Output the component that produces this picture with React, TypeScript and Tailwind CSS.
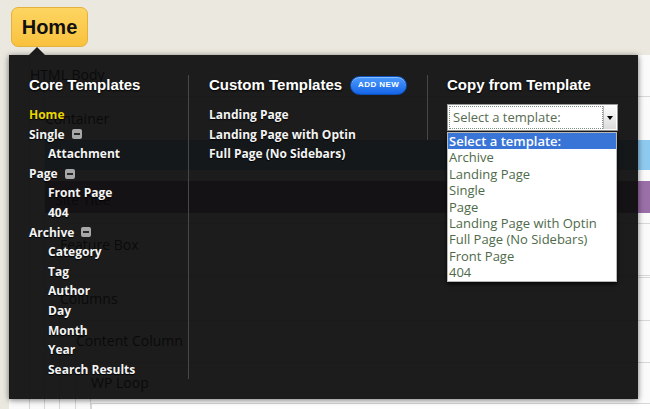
import React from "react";

const heading = "font-['Liberation_Sans',Arial,sans-serif] font-bold text-[15px] leading-[20px] text-white [text-shadow:0_1px_2px_#000]";
const item = "flex items-center h-[19.6px] font-['Open_Sans',sans-serif] font-bold text-[12px] leading-[19.6px] [text-shadow:0_1px_1px_#000] whitespace-nowrap";
const ghost = "font-['Open_Sans',sans-serif] text-[14px] leading-[18px] text-black whitespace-nowrap";

function Minus() {
  return (
    <span className="ml-[7px] flex h-[10px] w-[10px] items-center justify-center rounded-[2px] bg-[#a8a8a8]">
      <span className="h-[2px] w-[6px] bg-[#2a2a2a]" />
    </span>
  );
}

type Row = { label: string; level: 0 | 1; toggle?: boolean; active?: boolean };

const core: Row[] = [
  { label: "Home", level: 0, active: true },
  { label: "Single", level: 0, toggle: true },
  { label: "Attachment", level: 1 },
  { label: "Page", level: 0, toggle: true },
  { label: "Front Page", level: 1 },
  { label: "404", level: 1 },
  { label: "Archive", level: 0, toggle: true },
  { label: "Category", level: 1 },
  { label: "Tag", level: 1 },
  { label: "Author", level: 1 },
  { label: "Day", level: 1 },
  { label: "Month", level: 1 },
  { label: "Year", level: 1 },
  { label: "Search Results", level: 1 },
];

const custom = ["Landing Page", "Landing Page with Optin", "Full Page (No Sidebars)"];

const options = [
  "Archive",
  "Landing Page",
  "Single",
  "Page",
  "Landing Page with Optin",
  "Full Page (No Sidebars)",
  "Front Page",
  "404",
];

function Canvas() {
  // the page being edited, seen through the menu
  return (
    <div className="ml-[9px] mt-[8px] h-[360px] bg-[#fbfbfb] pl-[20px]">
      <div className="h-full border-l border-[#d8d8d8]">
        <div className={`${ghost} h-[41px] pt-[11px]`}>HTML Body</div>
        <div className="ml-[14px] border-l border-t border-[#d8d8d8]">
          <div className={`${ghost} h-[43px] pt-[13px]`}>Container</div>
          <div className="h-[30px] bg-[#8ecaf0]" />
          <div className="h-[11px]" />
          <div className={`${ghost} h-[32px] bg-[#9b6fa8] pl-[10px] pt-[10px] text-[#222]`}>Site Title</div>
          <div className="h-[10px]" />
          <div className="ml-[14px] border-l border-t border-[#d8d8d8]">
            <div className={`${ghost} h-[51px] pt-[12px]`}>Feature Box</div>
            <div className="border-t border-[#d8d8d8] pt-[1px]">
              <div className="border-t border-[#d8d8d8]">
                <div className={`${ghost} h-[42px] pt-[12px]`}>Columns</div>
                <div className="ml-[15px] border-l border-t border-[#d8d8d8]">
                  <div className={`${ghost} h-[41px] pt-[11px]`}>Content Column</div>
                  <div className="ml-[14px] border-l border-t border-[#d8d8d8]">
                    <div className={`${ghost} h-[40px] pt-[11px]`}>WP Loop</div>
                    <div className="h-[20px] border-l border-t border-[#d8d8d8] bg-white" />
                  </div>
                </div>
              </div>
            </div>
          </div>
        </div>
      </div>
    </div>
  );
}

function TemplateSelect() {
  return (
    <div className="relative mt-[9px] w-[171px]">
      <div className="flex h-[27px] items-stretch border border-[#9a9a9a] bg-white p-[1px]">
        <div className="flex flex-1 items-center border border-dotted border-[#7f957f] pl-[3px] font-['Open_Sans',sans-serif] text-[13px] text-[#566b52]">
          Select a template:
        </div>
        <div className="flex w-[13px] items-center justify-center border-l border-[#b5b5b5] bg-gradient-to-b from-[#fdfdfd] to-[#dcdcdc]">
          <span className="h-0 w-0 border-x-[3px] border-t-[4px] border-x-transparent border-t-black" />
        </div>
      </div>
      <div className="absolute left-0 top-[28px] w-[170px] border border-[#b8b8b8] bg-white shadow-[0_2px_4px_rgba(0,0,0,0.8)]">
        <div className="h-[16.4px] bg-[#3875d7] pl-[1px] font-['Open_Sans',sans-serif] text-[13px] font-semibold leading-[16.4px] text-white">
          Select a template:
        </div>
        {options.map((o) => (
          <div key={o} className="h-[16.4px] pl-[1px] font-['Open_Sans',sans-serif] text-[13px] leading-[16.4px] text-[#4e6a4a] whitespace-nowrap">
            {o}
          </div>
        ))}
      </div>
    </div>
  );
}

export default function App() {
  return (
    <div className="relative h-[409px] w-[650px] overflow-hidden bg-[#ebe8df]">
      <div className="ml-[11px] mt-[7px] flex h-[40px] w-[77px] items-center justify-center rounded-[7px] border border-[#e3b23c] bg-gradient-to-b from-[#fdd560] to-[#f9c23d] font-['Liberation_Sans',Arial,sans-serif] text-[20px] font-bold text-[#111]">
        Home
      </div>
      <Canvas />

      {/* template menu */}
      <div className="absolute left-[9px] top-[55px] flex w-[629px] items-start bg-[#0b0b0b]/[0.93] pb-[20px] pl-[20px] pt-[20px] shadow-[0_1px_6px_rgba(0,0,0,0.55)]">
        <span className="absolute -top-[8px] left-[20px] h-0 w-0 border-x-[8px] border-b-[8px] border-x-transparent border-b-[#1a1a1a]" />

        <div className="w-[160px] border-r border-[#474747]">
          <div className={heading}>Core Templates</div>
          <ul className="mt-[10px]">
            {core.map((r) => (
              <li
                key={r.label}
                className={`${item} ${r.level === 1 ? "pl-[19px]" : ""} ${r.active ? "text-[#ead600]" : "text-[#f4f4f4]"}`}
              >
                {r.label}
                {r.toggle && <Minus />}
              </li>
            ))}
          </ul>
        </div>

        <div className="w-[238px] pl-[20px]">
          <div className="flex items-center gap-[8px]">
            <span className={heading}>Custom Templates</span>
            <button className="flex h-[19px] w-[57px] items-center justify-center rounded-full border border-[#0d4fb8] bg-gradient-to-b from-[#4c9bff] to-[#1464e6] font-['Liberation_Sans',Arial,sans-serif] text-[8px] font-bold tracking-[0.4px] text-white shadow-[inset_0_1px_0_rgba(255,255,255,0.35)]">
              ADD NEW
            </button>
          </div>
          <ul className="mt-[10px]">
            {custom.map((c) => (
              <li key={c} className={`${item} text-[#f4f4f4]`}>
                {c}
              </li>
            ))}
          </ul>
        </div>

        <div className="w-[211px] border-l border-[#474747] pb-[9px] pl-[19px]">
          <div className={heading}>Copy from Template</div>
          <TemplateSelect />
        </div>
      </div>
    </div>
  );
}
